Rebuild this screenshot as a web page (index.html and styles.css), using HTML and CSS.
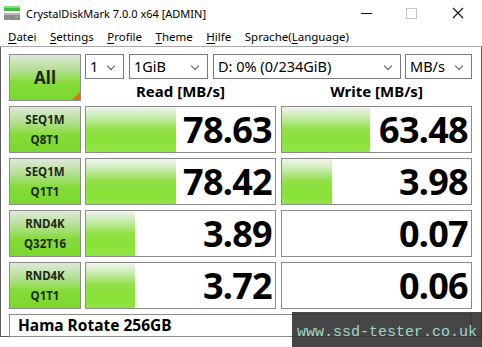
FILE: index.html
```html
<!DOCTYPE html>
<html>
<head>
  <title>CrystalDiskMark 7.0.0 x64 [ADMIN]</title>
  <link rel="stylesheet" href="styles.css">
</head>
<body>

  <div class="window">

    <!-- Title bar -->
    <div class="titlebar">
      <svg class="app-icon" width="17" height="16" viewBox="0 0 17 16">
        <rect x="0" y="1" width="16" height="5" fill="#3fbf3f"/>
        <rect x="0" y="1" width="16" height="2" fill="#7fe07f"/>
        <rect x="0" y="8" width="16" height="7" fill="#8c8c8c"/>
        <rect x="0" y="8" width="16" height="2" fill="#b8b8b8"/>
        <rect x="11" y="11" width="3" height="2" fill="#4fdf4f"/>
      </svg>
      <span class="title">CrystalDiskMark 7.0.0 x64 [ADMIN]</span>
      <div class="controls">
        <span class="ctl min"></span>
        <span class="ctl max"></span>
        <svg class="ctl close" width="12" height="12" viewBox="0 0 12 12">
          <path d="M1 1 L11 11 M11 1 L1 11" stroke="#111" stroke-width="1.1"/>
        </svg>
      </div>
    </div>

    <!-- Menu -->
    <div class="menubar">
      <span><u>D</u>atei</span>
      <span><u>S</u>ettings</span>
      <span><u>P</u>rofile</span>
      <span><u>T</u>heme</span>
      <span><u>H</u>ilfe</span>
      <span>Sprache(<u>L</u>anguage)</span>
    </div>

    <!-- Main panel -->
    <div class="client">
      <div class="grid">
        <div class="btn all">All<span class="corner"></span></div>

        <div class="selects">
          <div class="combo c-count">1<i></i></div>
          <div class="combo c-size">1GiB<i></i></div>
          <div class="combo c-drive">D: 0% (0/234GiB)<i></i></div>
          <div class="combo c-unit">MB/s<i></i></div>
        </div>

        <div class="head">Read [MB/s]</div>
        <div class="head write">Write [MB/s]</div>

        <div class="btn label">SEQ1M<br>Q8T1</div>
        <div class="result"><div class="bar" style="width: 90px"></div><span>78.63</span></div>
        <div class="result write"><div class="bar" style="width: 88px"></div><span>63.48</span></div>

        <div class="btn label">SEQ1M<br>Q1T1</div>
        <div class="result"><div class="bar" style="width: 90px"></div><span>78.42</span></div>
        <div class="result write"><div class="bar" style="width: 50px"></div><span>3.98</span></div>

        <div class="btn label">RND4K<br>Q32T16</div>
        <div class="result"><div class="bar" style="width: 49px"></div><span>3.89</span></div>
        <div class="result write"><span>0.07</span></div>

        <div class="btn label">RND4K<br>Q1T1</div>
        <div class="result"><div class="bar" style="width: 49px"></div><span>3.72</span></div>
        <div class="result write"><span>0.06</span></div>

        <div class="name">Hama Rotate 256GB</div>
      </div>
    </div>

    <!-- Watermark overlay -->
    <div class="watermark">www.ssd-tester.co.uk</div>
  </div>

</body>
</html>
```

FILE: styles.css
```css
body {
  margin: 0;
  background: #fff;
  font-family: "Noto Sans", "Open Sans", sans-serif;
  color: #000;
  overflow: hidden;
}

.window {
  position: relative;
  width: 482px;
  height: 347px;
  background: #fff;
}

/* title bar */
.titlebar {
  display: flex;
  align-items: center;
  height: 26px;
}

.app-icon {
  margin: 0 5px 0 4px;
}

.title {
  font-size: 11px;
  color: #000;
}

.controls {
  display: flex;
  align-items: center;
  margin-left: auto;
  height: 26px;
}

.ctl {
  display: block;
}

.min {
  width: 11px;
  height: 1px;
  background: #111;
  margin-right: 34px;
}

.max {
  width: 9px;
  height: 9px;
  border: 1px solid #c4c4c4;
  margin-right: 35px;
}

.close {
  margin-right: 18px;
}

/* menu */
.menubar {
  display: flex;
  align-items: center;
  height: 20px;
  padding-left: 8px;
  font-size: 11.5px;
  border-bottom: 1px solid #a8a8a8;
}

.menubar span {
  margin-right: 13.5px;
}

.menubar u {
  text-decoration-thickness: 1px;
  text-underline-offset: 2px;
}

/* main panel */
.client {
  height: 290px;
  box-sizing: border-box;
  padding: 7px 9px 0 8px;
  border-left: 1px solid #5a5a5a;
  border-right: 1px solid #5a5a5a;
  border-bottom: 1px solid #5a5a5a;
}

.grid {
  display: grid;
  grid-template-columns: 72px 191px 192px;
  grid-template-rows: 25px 17px 47px 47px 47px 47px 23px;
  column-gap: 4px;
  row-gap: 5px;
}

.btn {
  position: relative;
  box-sizing: border-box;
  border: 1px solid #8c8c8c;
  background: linear-gradient(to bottom, #dfe9d8 0%, #b8e09a 30%, #86dc3a 62%, #7ad82c 100%);
  display: flex;
  flex-direction: column;
  align-items: center;
  justify-content: center;
  font-weight: bold;
  color: #1c2a14;
  text-align: center;
}

.all {
  grid-row: 1 / span 2;
  font-size: 17px;
}

.corner {
  position: absolute;
  right: 0;
  bottom: 0;
  width: 0;
  height: 0;
  border-left: 8px solid transparent;
  border-bottom: 8px solid #e0701e;
}

.label {
  font-size: 11.5px;
  line-height: 20px;
}

.selects {
  grid-column: 2 / span 2;
  display: flex;
  gap: 5px;
}

.combo {
  position: relative;
  box-sizing: border-box;
  height: 25px;
  border: 1px solid #7a7a7a;
  font-size: 14.5px;
  line-height: 23px;
  padding-left: 4px;
  white-space: nowrap;
}

.combo i {
  position: absolute;
  right: 9px;
  top: 8px;
  width: 5px;
  height: 5px;
  border-right: 1px solid #555;
  border-bottom: 1px solid #555;
  transform: rotate(45deg);
}

.c-count { width: 39px; }
.c-size { width: 79px; }
.c-drive { width: 188px; }
.c-unit { width: 67px; margin-left: -1px; }

.head {
  font-size: 15px;
  font-weight: bold;
  text-align: center;
  line-height: 17px;
  margin-top: -1px;
}

.write {
  margin-left: 1px;
}

.result {
  position: relative;
  box-sizing: border-box;
  border: 1px solid #8c8c8c;
  display: flex;
  align-items: center;
  justify-content: flex-end;
  padding-right: 3px;
}

.bar {
  position: absolute;
  left: 0;
  top: 0;
  bottom: 0;
  background: linear-gradient(to bottom, #f1f3ef 0%, #c9ebb0 22%, #94e14c 48%, #87e236 75%, #93e548 100%);
}

.result span {
  position: relative;
  font-size: 36px;
  font-weight: bold;
  letter-spacing: -0.7px;
  line-height: 1;
}

.name {
  grid-column: 1 / span 3;
  box-sizing: border-box;
  border: 1px solid #8c8c8c;
  font-size: 15.5px;
  font-weight: bold;
  line-height: 21px;
  padding-left: 8px;
}

/* watermark */
.watermark {
  position: absolute;
  left: 292px;
  top: 312px;
  right: 0;
  bottom: 0;
  background: rgba(44, 44, 44, 0.88);
  color: #9ed6c4;
  font-family: "Liberation Mono", monospace;
  font-size: 15px;
  padding: 12px 0 0 5px;
}
```
